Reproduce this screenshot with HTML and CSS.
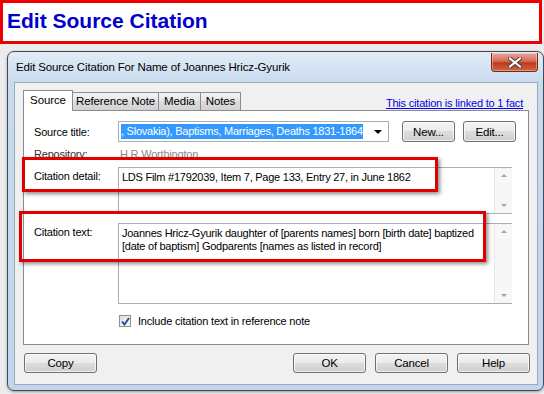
FILE: index.html
```html
<!DOCTYPE html>
<html>
<head>
<meta charset="utf-8">
<link rel="stylesheet" href="styles.css">
</head>
<body>
<div class="banner">Edit Source Citation</div>
<div class="desktop">
  <div class="window">
    <div class="titlebar">
      <span class="title">Edit Source Citation For Name of Joannes Hricz-Gyurik</span>
      <span class="close"><svg width="14" height="11" viewBox="0 0 14 11"><path d="M2 1.5 L12 9.5 M12 1.5 L2 9.5" stroke="#3a3a3a" stroke-width="4" stroke-linecap="square"/><path d="M2 1.5 L12 9.5 M12 1.5 L2 9.5" stroke="#fff" stroke-width="2.2" stroke-linecap="square"/></svg></span>
    </div>
    <div class="client">
      <div class="tabrow">
        <div class="tabs">
          <span class="tab active t1">Source</span>
          <span class="tab t2">Reference Note</span>
          <span class="tab t3">Media</span>
          <span class="tab t4">Notes</span>
        </div>
        <a class="link">This citation is linked to 1 fact</a>
      </div>
      <div class="panel">
        <div class="row r-source">
          <span class="label">Source title:</span>
          <div class="combo"><span class="sel">, Slovakia), Baptisms, Marriages, Deaths 1831-1864</span><span class="arrow"></span></div>
          <span class="btn small">New...</span>
          <span class="btn small">Edit...</span>
        </div>
        <div class="row r-repo">
          <span class="label">Repository:</span>
          <span class="grey">H R Worthington</span>
        </div>
        <div class="row r-detail">
          <span class="label">Citation detail:</span>
          <div class="memo detail"><div class="memotext">LDS Film #1792039, Item 7, Page 133, Entry 27, in June 1862</div><div class="scroll"><span class="up"></span><span class="down"></span></div></div>
        </div>
        <div class="row r-text">
          <span class="label">Citation text:</span>
          <div class="memo ctext"><div class="memotext">Joannes Hricz-Gyurik daughter of [parents names] born [birth date] baptized [date of baptism] Godparents [names as listed in record]</div><div class="scroll"><span class="up"></span><span class="down"></span></div></div>
        </div>
        <div class="row r-check">
          <span class="check"><svg width="9" height="9" viewBox="0 0 9 9"><path d="M1 4.5 L3.5 7.5 L8 1" fill="none" stroke="#2a3f8e" stroke-width="1.8"/></svg></span>
          <span>Include citation text in reference note</span>
        </div>
      </div>
      <div class="buttons">
        <span class="btn wide">Copy</span>
        <span class="spacer"></span>
        <span class="btn wide">OK</span>
        <span class="btn wide">Cancel</span>
        <span class="btn wide">Help</span>
      </div>
    </div>
  </div>
</div>
<div class="hl hl1"></div>
<div class="hl hl2"></div>
</body>
</html>
```
FILE: styles.css
```css
html, body { margin: 0; padding: 0; }
body {
  width: 544px; height: 394px; overflow: hidden; position: relative;
  background: #ececec;
  font-family: "Liberation Sans", Arial, sans-serif;
  font-size: 11px; color: #000; letter-spacing: -0.2px;
}
.banner {
  box-sizing: border-box; width: 542px; height: 44px;
  border: 3px solid #ee0000; background: #fff;
  font-weight: bold; font-size: 21px; color: #0000cc; letter-spacing: 0;
  padding: 6px 0 0 4px; line-height: 24px;
}
.desktop { padding: 7px 0 0 7px; }
.window {
  box-sizing: border-box; width: 537px; height: 340px;
  border: 1px solid #3d4a58; border-radius: 7px;
  background: linear-gradient(#e3ecf7, #c9daee 30px, #c2d5ec);
  padding: 0 5px 5px 6px;
  box-shadow: 0 1px 3px rgba(0,0,0,.35);
  display: flex; flex-direction: column;
}
.titlebar {
  height: 30px; display: flex; align-items: flex-start; justify-content: space-between;
}
.title { font-size: 11.5px; letter-spacing: -0.15px; margin: 9px 0 0 2px; color: #000; }
.close {
  width: 45px; height: 18px; margin-top: 1px;
  border: 1px solid #6b2a22; border-top: none; border-radius: 0 0 4px 4px;
  background: linear-gradient(#e9a99c, #d56c55 45%, #c0391e 55%, #d1643f);
  display: flex; align-items: center; justify-content: center;
  box-shadow: inset 0 0 0 1px rgba(255,255,255,.35);
}
.client {
  flex: 1; background: #f0f0f0; border: 1px solid #97a9bd;
  padding: 7px 9px 0 8px;
  display: flex; flex-direction: column;
}
.tabrow { display: flex; align-items: flex-end; height: 20px; margin-left: 1px; }
.tabs { display: flex; align-items: flex-end; }
.tab {
  box-sizing: border-box; height: 18px; line-height: 17px; text-align: center;
  border: 1px solid #898c95; border-bottom: none; margin-right: -1px;
  background: linear-gradient(#f3f3f3, #e4e4e4 50%, #dcdcdc 50%, #d3d3d3);
  font-size: 11.5px; letter-spacing: -0.1px;
}
.t1 { width: 50px; }
.t2 { width: 87px; }
.t3 { width: 43px; }
.t4 { width: 41px; }
.tab.active {
  height: 21px; line-height: 19px; background: #fff; position: relative; z-index: 1;
  margin-bottom: -1px; border-color: #898c95; margin-left: -1px;
}
.link {
  margin-left: auto; margin-right: 5px; margin-bottom: 1px;
  color: #0000ee; text-decoration: underline; font-size: 11px;
}
.panel {
  box-sizing: border-box; width: 506px; height: 235px;
  border: 1px solid #898c95; background: #fff; margin-left: 0;
  padding: 10px 0 0 10px;
  display: flex; flex-direction: column;
}
.row { display: flex; }
.label { width: 84px; flex: none; }
.r-source { align-items: center; height: 21px; }
.combo {
  box-sizing: border-box; width: 271px; height: 21px; margin-right: 13px;
  border: 1px solid #abadb3; background: #fff;
  display: flex; align-items: center; padding: 0 3px 0 2px;
}
.sel { background: #3399ff; color: #fff; white-space: nowrap; overflow: hidden; line-height: 15px; font-size: 11px; letter-spacing: -0.25px; }
.arrow {
  margin-left: auto; margin-right: 3px; width: 0; height: 0;
  border-left: 4px solid transparent; border-right: 4px solid transparent; border-top: 4px solid #000;
}
.btn {
  box-sizing: border-box; height: 21px; border: 1px solid #707070; border-radius: 3px;
  background: linear-gradient(#f2f2f2, #ebebeb 50%, #dddddd 50%, #cfcfcf);
  box-shadow: inset 0 0 0 1px rgba(255,255,255,.7);
  display: flex; align-items: center; justify-content: center; font-size: 11.5px;
}
.btn.small { width: 53px; margin-right: 8px; }
.r-repo { margin-top: 5px; height: 14px; align-items: center; color: #333; }
.grey { color: #8a8a8a; margin-left: 2px; }
.r-detail { margin-top: 6px; }
.r-text { margin-top: 9px; }
.r-detail .label, .r-text .label { padding-top: 3px; }
.memo {
  box-sizing: border-box; width: 394px; border: 1px solid #abadb3; border-right: none;
  display: flex; background: #fff;
}
.memo.detail { height: 47px; }
.memo.ctext { height: 81px; }
.memotext { flex: 1; padding: 3px 4px 0 3px; line-height: 13px; letter-spacing: -0.25px; }
.scroll {
  width: 17px; display: flex; flex-direction: column; justify-content: space-between; align-items: center;
  background: #f7f7f7; border-left: 1px solid #e8e8e8; padding: 6px 0 6px;
}
.up, .down { width: 0; height: 0; border-left: 3px solid transparent; border-right: 3px solid transparent; }
.up { border-bottom: 3px solid #a5a5a5; }
.down { border-top: 3px solid #a5a5a5; }
.r-check { margin-top: 11px; margin-left: 85px; align-items: center; }
.check {
  box-sizing: border-box; width: 12px; height: 12px; border: 1px solid #8e8f8f;
  background: linear-gradient(135deg, #dcdcdc, #fbfbfb);
  display: flex; align-items: center; justify-content: center; margin-right: 7px;
}
.buttons { display: flex; margin-top: 8px; margin-left: 1px; width: 506px; }
.btn.wide { width: 73px; height: 20px; }
.buttons .btn.wide + .btn.wide { margin-left: 9px; }
.spacer { flex: 1; }
.hl {
  position: absolute; box-sizing: border-box; border: 3px solid #e00000;
  box-shadow: 2px 2px 4px rgba(0,0,0,.45);
}
.hl1 { left: 22px; top: 157px; width: 416px; height: 35px; }
.hl2 { left: 19px; top: 211px; width: 467px; height: 51px; }
```
